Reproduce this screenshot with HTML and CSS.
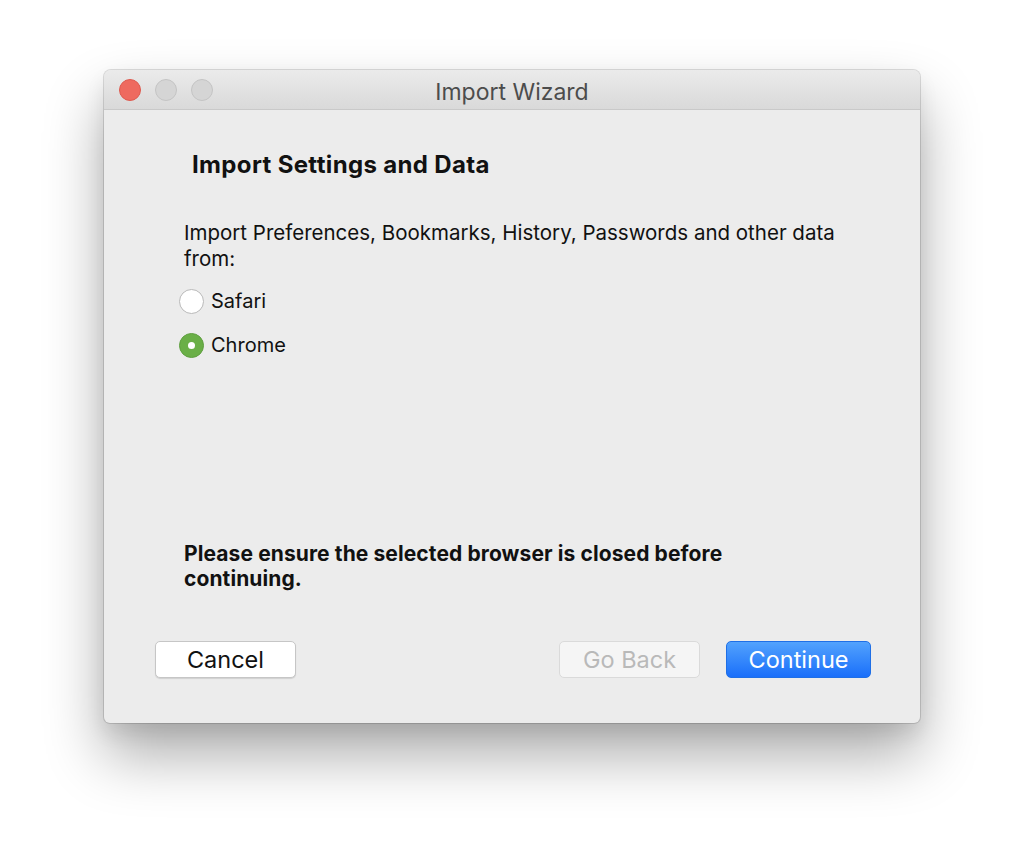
FILE: index.html
```html
<!DOCTYPE html>
<html>
<head>
<meta charset="utf-8">
<link rel="stylesheet" href="styles.css">
</head>
<body>
<div class="stage">
  <div class="window">
    <div class="titlebar">
      <div class="lights">
        <span class="light red"></span>
        <span class="light gray"></span>
        <span class="light gray"></span>
      </div>
      <div class="title">Import Wizard</div>
    </div>
    <div class="content">
      <h1 class="heading">Import Settings and Data</h1>
      <p class="desc">Import Preferences, Bookmarks, History, Passwords and other data from:</p>
      <div class="options">
        <label class="option"><span class="radio"></span><span>Safari</span></label>
        <label class="option"><span class="radio checked"></span><span>Chrome</span></label>
      </div>
      <p class="note">Please ensure the selected browser is closed before continuing.</p>
      <div class="buttons">
        <button class="btn cancel">Cancel</button>
        <div class="right">
          <button class="btn disabled">Go Back</button>
          <button class="btn primary">Continue</button>
        </div>
      </div>
    </div>
  </div>
</div>
</body>
</html>
```

FILE: styles.css
```css
html, body {
  margin: 0;
  padding: 0;
  background: #ffffff;
}
body {
  font-family: Inter, "Liberation Sans", sans-serif;
  color: #111;
  min-height: 861px;
}
.stage {
  padding: 70px 0 0 104px;
}
.window {
  width: 816px;
  height: 653px;
  background: #ececec;
  border-radius: 7px 7px 6px 6px;
  box-shadow: 0 0 0 1px rgba(0,0,0,0.13), 0 32px 60px rgba(0,0,0,0.33), 0 10px 20px rgba(0,0,0,0.08);
  display: flex;
  flex-direction: column;
  overflow: hidden;
}
.titlebar {
  height: 39px;
  border-bottom: 1px solid #c9c9c9;
  background: linear-gradient(#ebebeb, #d9d9d9);
  display: flex;
  align-items: center;
  position: relative;
}
.lights {
  display: flex;
  gap: 14px;
  padding-left: 15px;
  position: relative;
  z-index: 1;
}
.light {
  width: 22px;
  height: 22px;
  border-radius: 50%;
  box-sizing: border-box;
}
.light.red {
  background: #ee6a5f;
  border: 1px solid #de5a4f;
}
.light.gray {
  background: #d5d5d5;
  border: 1px solid #c4c4c4;
}
.title {
  position: absolute;
  left: 0;
  right: 0;
  top: 8px;
  text-align: center;
  font-size: 23px;
  line-height: 28px;
  color: #4c4c4c;
}
.content {
  flex: 1;
  display: flex;
  flex-direction: column;
  padding: 0 49px 45px 51px;
}
.heading {
  margin: 40px 0 0 37px;
  font-size: 24px;
  line-height: 30px;
  font-weight: 700;
  letter-spacing: 0.35px;
  color: #111;
}
.desc {
  margin: 40px 0 0 29px;
  font-size: 20.5px;
  line-height: 26px;
  width: 670px;
}
.options {
  margin: 13px 0 0 24px;
  display: flex;
  flex-direction: column;
  gap: 12px;
}
.option {
  display: flex;
  align-items: center;
  gap: 7px;
  height: 32px;
  font-size: 20px;
}
.radio {
  width: 25px;
  height: 25px;
  border-radius: 50%;
  box-sizing: border-box;
  background: #fff;
  border: 1px solid #b9b9b9;
  display: flex;
  align-items: center;
  justify-content: center;
}
.radio.checked {
  background: #6aaf47;
  border-color: #5f9f40;
}
.radio.checked::after {
  content: "";
  width: 7px;
  height: 7px;
  border-radius: 50%;
  background: #fff;
}
.note {
  margin: auto 0 0 29px;
  font-size: 21px;
  line-height: 25px;
  font-weight: 700;
  letter-spacing: 0.1px;
  width: 580px;
}
.buttons {
  margin-top: 50px;
  display: flex;
  justify-content: space-between;
}
.right {
  display: flex;
  gap: 26px;
}
.btn {
  font-family: inherit;
  font-size: 23.5px;
  height: 37px;
  width: 141px;
  border-radius: 5px;
  padding: 0;
  box-sizing: border-box;
}
.cancel {
  background: #fff;
  border: 1px solid #c6c6c6;
  box-shadow: 0 1px 1px rgba(0,0,0,0.12);
  color: #111;
}
.disabled {
  background: #f5f5f5;
  border: 1px solid #dadada;
  color: #b9b9b9;
}
.primary {
  width: 145px;
  background: linear-gradient(#52a2fd, #1a6ffa);
  border: 1px solid #1f6fe6;
  color: #fff;
}
```
